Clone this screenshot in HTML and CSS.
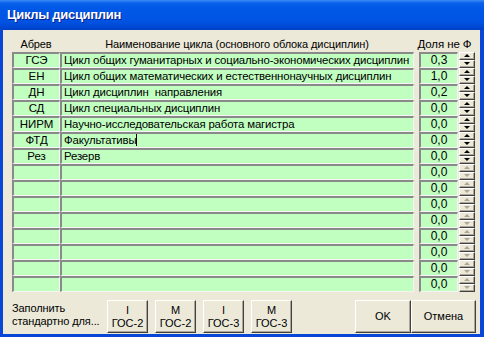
FILE: index.html
```html
<!DOCTYPE html>
<html>
<head>
	<title>Циклы дисциплин</title>
	<link rel="stylesheet" href="styles.css">
</head>
<body>
	<div class="window">
		<div class="titlebar">Циклы дисциплин</div>
		<div class="client">
			<div class="head">
				<div class="h-abbr">Абрев</div>
				<div class="h-name">Наименование цикла (основного облока дисциплин)</div>
				<div class="h-val">Доля не Ф</div>
			</div>
			<div class="grid">
				<div class="row"><div class="cell abbr">ГСЭ</div><div class="cell name">Цикл общих гуманитарных и социально-экономических дисциплин</div><div class="cell val">0,3</div><div class="spin"><span class="up"></span><span class="down"></span></div></div>
				<div class="row"><div class="cell abbr">ЕН</div><div class="cell name">Цикл общих математических и естественнонаучных дисциплин</div><div class="cell val">1,0</div><div class="spin"><span class="up"></span><span class="down"></span></div></div>
				<div class="row"><div class="cell abbr">ДН</div><div class="cell name">Цикл дисциплин&nbsp; направления</div><div class="cell val">0,2</div><div class="spin"><span class="up"></span><span class="down"></span></div></div>
				<div class="row"><div class="cell abbr">СД</div><div class="cell name">Цикл специальных дисциплин</div><div class="cell val">0,0</div><div class="spin"><span class="up"></span><span class="down"></span></div></div>
				<div class="row"><div class="cell abbr">НИРМ</div><div class="cell name">Научно-исследовательская работа магистра</div><div class="cell val">0,0</div><div class="spin"><span class="up"></span><span class="down"></span></div></div>
				<div class="row"><div class="cell abbr">ФТД</div><div class="cell name">Факультативы<span class="caret"></span></div><div class="cell val">0,0</div><div class="spin"><span class="up"></span><span class="down"></span></div></div>
				<div class="row"><div class="cell abbr">Рез</div><div class="cell name">Резерв</div><div class="cell val">0,0</div><div class="spin"><span class="up"></span><span class="down"></span></div></div>
				<div class="row"><div class="cell abbr"></div><div class="cell name"></div><div class="cell val">0,0</div><div class="spin off"><span class="up"></span><span class="down"></span></div></div>
				<div class="row"><div class="cell abbr"></div><div class="cell name"></div><div class="cell val">0,0</div><div class="spin off"><span class="up"></span><span class="down"></span></div></div>
				<div class="row"><div class="cell abbr"></div><div class="cell name"></div><div class="cell val">0,0</div><div class="spin off"><span class="up"></span><span class="down"></span></div></div>
				<div class="row"><div class="cell abbr"></div><div class="cell name"></div><div class="cell val">0,0</div><div class="spin off"><span class="up"></span><span class="down"></span></div></div>
				<div class="row"><div class="cell abbr"></div><div class="cell name"></div><div class="cell val">0,0</div><div class="spin off"><span class="up"></span><span class="down"></span></div></div>
				<div class="row"><div class="cell abbr"></div><div class="cell name"></div><div class="cell val">0,0</div><div class="spin off"><span class="up"></span><span class="down"></span></div></div>
				<div class="row"><div class="cell abbr"></div><div class="cell name"></div><div class="cell val">0,0</div><div class="spin off"><span class="up"></span><span class="down"></span></div></div>
				<div class="row"><div class="cell abbr"></div><div class="cell name"></div><div class="cell val">0,0</div><div class="spin off"><span class="up"></span><span class="down"></span></div></div>
			</div>
			<div class="bottom">
				<div class="fill-label">Заполнить<br>стандартно для...</div>
				<div class="std">
					<div class="btn small">I<br>ГОС-2</div>
					<div class="btn small">M<br>ГОС-2</div>
					<div class="btn small">I<br>ГОС-3</div>
					<div class="btn small">M<br>ГОС-3</div>
				</div>
				<div class="actions">
					<div class="btn ok">OK</div>
					<div class="btn cancel">Отмена</div>
				</div>
			</div>
		</div>
	</div>
</body>
</html>
```
FILE: styles.css
```css
body {
	margin: 0;
	background: #ffffff;
}
.window {
	width: 484px;
	height: 337px;
	background: #0846d8;
	display: flex;
	flex-direction: column;
	font-family: "Liberation Sans", Arial, sans-serif;
	font-size: 11px;
	letter-spacing: -0.1px;
	color: #000000;
}
.titlebar {
	height: 30px;
	box-sizing: border-box;
	padding: 6px 0 0 7px;
	background: linear-gradient(to bottom, #3d8cf5 0, #0a61eb 3px, #0058e6 8px, #0054e3 70%, #0048d4 90%, #003fc4 100%);
	color: #ffffff;
	font-weight: bold;
	font-size: 13px;
	letter-spacing: -0.3px;
	line-height: 17px;
	text-shadow: 1px 1px 0 #0a1e8c;
}
.client {
	flex: 1;
	margin: 0 4px 3px 3px;
	background: #ece9d8;
	padding: 7px 0 0 9px;
	display: flex;
	flex-direction: column;
}
.head {
	display: flex;
	height: 15px;
	line-height: 14px;
}
.h-abbr {
	width: 48px;
	text-align: center;
}
.h-name {
	width: 354px;
	text-align: center;
}
.h-val {
	width: 61px;
	text-align: center;
	white-space: nowrap;
	font-size: 11.5px;
}
.grid {
	display: flex;
	flex-direction: column;
}
.row {
	display: flex;
	height: 16px;
}
.cell {
	box-sizing: border-box;
	height: 16px;
	background: #c0ffc0;
	border-style: solid;
	border-width: 2px 1px 1px 2px;
	border-color: #8a8a8a #f4f4f4 #f4f4f4 #8a8a8a;
	line-height: 13px;
	white-space: nowrap;
	overflow: hidden;
}
.abbr {
	width: 48px;
	text-align: center;
	font-size: 11.5px;
}
.name {
	width: 354px;
	padding-left: 2px;
	font-size: 11.4px;
	letter-spacing: -0.15px;
}
.val {
	width: 39px;
	margin-left: 5px;
	text-align: center;
	font-size: 12px;
	letter-spacing: 0;
}
.caret {
	display: inline-block;
	width: 1px;
	height: 12px;
	background: #000000;
	vertical-align: -2px;
}
.spin {
	width: 16px;
	margin-left: 1px;
	display: flex;
	flex-direction: column;
}
.spin span {
	box-sizing: border-box;
	height: 8px;
	background: #ece9d8;
	border-style: solid;
	border-width: 1px;
	border-color: #ffffff #404040 #404040 #ffffff;
	box-shadow: inset -1px -1px 0 #aca899;
	position: relative;
}
.spin span::after {
	content: "";
	position: absolute;
	left: 4px;
	top: 1px;
	border-left: 3px solid transparent;
	border-right: 3px solid transparent;
}
.spin .up::after {
	border-bottom: 3px solid #000000;
}
.spin .down::after {
	border-top: 3px solid #000000;
}
.spin.off .up::after {
	border-bottom-color: #aca899;
}
.spin.off .down::after {
	border-top-color: #aca899;
}
.bottom {
	display: flex;
	margin-top: 8px;
	height: 33px;
	letter-spacing: 0;
}
.fill-label {
	width: 95px;
	padding-top: 2px;
	line-height: 13px;
	white-space: nowrap;
	letter-spacing: -0.1px;
}
.std {
	display: flex;
	gap: 7px;
}
.btn {
	box-sizing: border-box;
	height: 33px;
	background: #ece9d8;
	border-style: solid;
	border-width: 1px;
	border-color: #ffffff #404040 #404040 #ffffff;
	box-shadow: inset -1px -1px 0 #aca899;
	text-align: center;
	display: flex;
	flex-direction: column;
	justify-content: center;
	line-height: 13px;
}
.small {
	width: 41px;
}
.actions {
	display: flex;
	margin-left: auto;
	margin-right: 4px;
}
.ok {
	width: 56px;
}
.cancel {
	width: 65px;
}
```
